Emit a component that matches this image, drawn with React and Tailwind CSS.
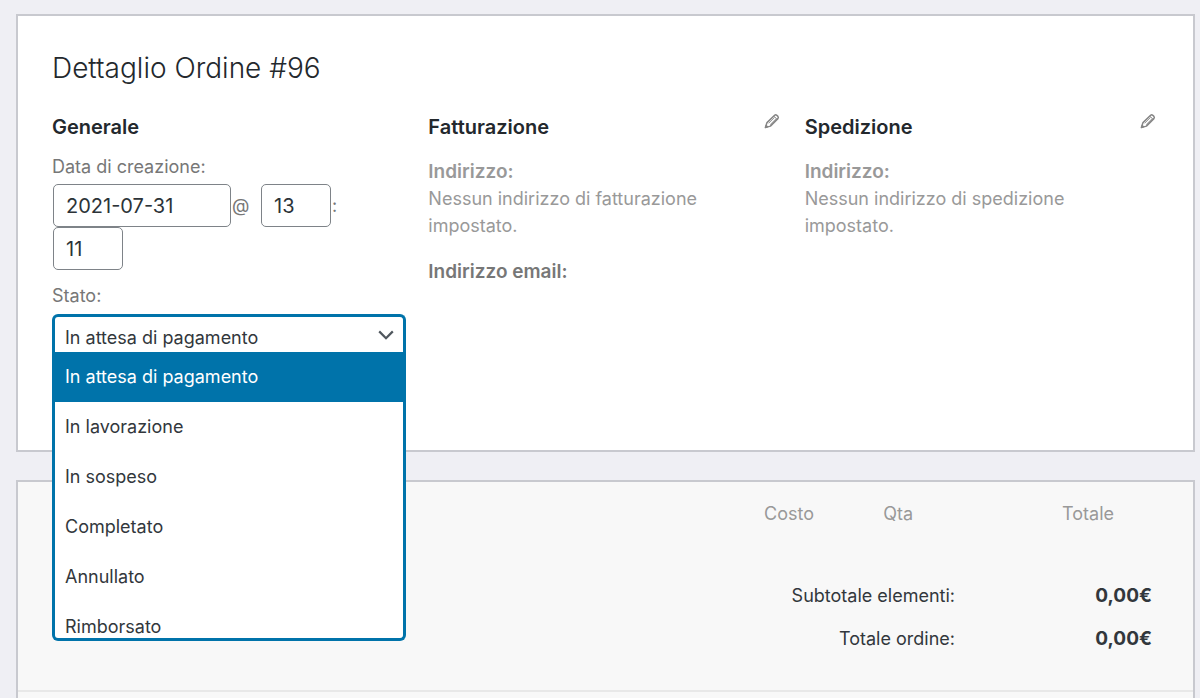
import { useState } from 'react'

const statuses = [
  'In attesa di pagamento',
  'In lavorazione',
  'In sospeso',
  'Completato',
  'Annullato',
  'Rimborsato',
]

const inputClass =
  'h-[43px] rounded-[5px] border border-[#7e8388] bg-white px-3 text-[20px] text-[#2c3338]'

const PencilIcon = () => (
  <svg viewBox="0 0 16 16" className="size-4" fill="none" stroke="#858585" strokeLinejoin="round" aria-hidden="true">
    <path d="M1.4 14.6 3 9.6 10.6 2.3Q11.7 1.4 12.8 2.3L13.9 3.4Q14.8 4.5 13.9 5.6L6.4 13.1Z" strokeWidth="1.5" />
    <path d="M6.2 11.6 12 5.8M4.7 10.2 10.6 4.3M10 3.2l3 3" strokeWidth="0.9" />
    <path d="M1.4 14.6 2.2 12 4 13.8Z" fill="#858585" strokeWidth="1" />
  </svg>
)

const ChevronIcon = () => (
  <svg
    viewBox="0 0 16 10"
    className="pointer-events-none absolute top-4 right-3 h-[10px] w-4"
    fill="none"
    stroke="#50575e"
    strokeWidth="2.2"
    aria-hidden="true"
  >
    <path d="M1.2 1.4 8 8.2l6.8-6.8" />
  </svg>
)

const AddressColumn = ({ title, address, children }) => (
  <section>
    <div className="flex items-start justify-between">
      <h3 className="text-[20px] leading-7 font-semibold text-[#23282d]">{title}</h3>
      <button type="button" aria-label={`Modifica ${title}`} className="mr-[3px]">
        <PencilIcon />
      </button>
    </div>
    <div className="mt-[17px] max-w-[320px] leading-[27px] text-[#999]">
      <p>
        <strong className="block text-[19px] font-semibold">Indirizzo:</strong>
        {address}
      </p>
      {children}
    </div>
  </section>
)

function StatusSelect() {
  const [status, setStatus] = useState(statuses[0])

  return (
    <div className="relative mt-1">
      <select
        id="order-status"
        value={status}
        onChange={(e) => setStatus(e.target.value)}
        className="block h-[38px] w-full appearance-none rounded-t-[6px] border-3 border-b-0 border-[#0073aa] bg-white pt-[6px] pl-[10px] text-[18px] text-[#32373c] outline-none"
      >
        {statuses.map((s) => (
          <option key={s}>{s}</option>
        ))}
      </select>
      <ChevronIcon />

      {/* open list, lies over the items panel below */}
      <ul
        role="listbox"
        aria-label="Stato"
        className="absolute top-full left-0 z-10 h-[289px] w-full overflow-hidden rounded-b-[6px] border-3 border-t-0 border-[#0073aa] bg-white"
      >
        {statuses.map((s) => (
          <li
            key={s}
            role="option"
            aria-selected={s === status}
            onClick={() => setStatus(s)}
            className="h-[50px] cursor-pointer px-[10px] leading-[50px] text-[#32373c] aria-selected:bg-[#0073aa] aria-selected:text-white"
          >
            {s}
          </li>
        ))}
      </ul>
    </div>
  )
}

const GeneralColumn = () => (
  <section>
    <h3 className="text-[20px] leading-7 font-semibold text-[#23282d]">Generale</h3>
    <label htmlFor="order-date" className="mt-3 block leading-7 text-[#777]">
      Data di creazione:
    </label>
    <div className="mt-[3px] flex max-w-80 flex-wrap items-center pl-px text-[#777]">
      <input id="order-date" defaultValue="2021-07-31" className={`${inputClass} w-[178px]`} />
      <span className="w-[30px] pl-px">@</span>
      <input aria-label="Ora" defaultValue="13" className={`${inputClass} w-[70px]`} />
      <span className="pl-px">:</span>
      <input aria-label="Minuti" defaultValue="11" className={`${inputClass} w-[70px]`} />
    </div>
    <label htmlFor="order-status" className="mt-3 block leading-7 text-[#777]">
      Stato:
    </label>
    <StatusSelect />
  </section>
)

const OrderItems = () => (
  <div className="mt-7 flex grow flex-col border-2 border-b-0 border-[#c8c9cf] bg-[#f8f8f8]">
    <table className="mt-[18px] w-full">
      <thead>
        <tr className="text-right leading-7 text-[#999]">
          <th className="font-normal" />
          <th className="w-[99px] font-normal">Costo</th>
          <th className="w-[99px] font-normal">Qta</th>
          <th className="w-[201px] font-normal">Totale</th>
          <th className="w-[79px] font-normal" />
        </tr>
      </thead>
    </table>

    <div className="mt-[46px] border-b-2 border-[#e8e8e8] pr-[41px] pb-[30px]">
      <table className="w-full text-right leading-[43px] text-[#32373c]">
        <tbody>
          <tr>
            <th scope="row" className="font-normal">Subtotale elementi:</th>
            <td className="w-[197px] text-[19px] font-bold">0,00€</td>
          </tr>
          <tr>
            <th scope="row" className="font-normal">Totale ordine:</th>
            <td className="w-[197px] text-[19px] font-bold">0,00€</td>
          </tr>
        </tbody>
      </table>
    </div>
  </div>
)

export default function App() {
  return (
    <div className="flex min-h-screen flex-col bg-[#efeff4] pt-[14px] pr-[5px] pl-4 font-['Inter',sans-serif] text-[18px]">
      <main className="flex grow flex-col">
        <div className="border-2 border-[#c8c9cf] bg-white px-[34px] pt-[34px] pb-[98px]">
          <h2 className="text-[28px] leading-9 font-light text-[#23282d]">Dettaglio Ordine #96</h2>
          <div className="mt-[27px] grid grid-cols-3 gap-[22px]">
            <GeneralColumn />
            <AddressColumn title="Fatturazione" address="Nessun indirizzo di fatturazione impostato.">
              <p className="mt-[19px] text-[19px] font-semibold text-[#777]">Indirizzo email:</p>
            </AddressColumn>
            <AddressColumn title="Spedizione" address="Nessun indirizzo di spedizione impostato." />
          </div>
        </div>
        <OrderItems />
      </main>
    </div>
  )
}
